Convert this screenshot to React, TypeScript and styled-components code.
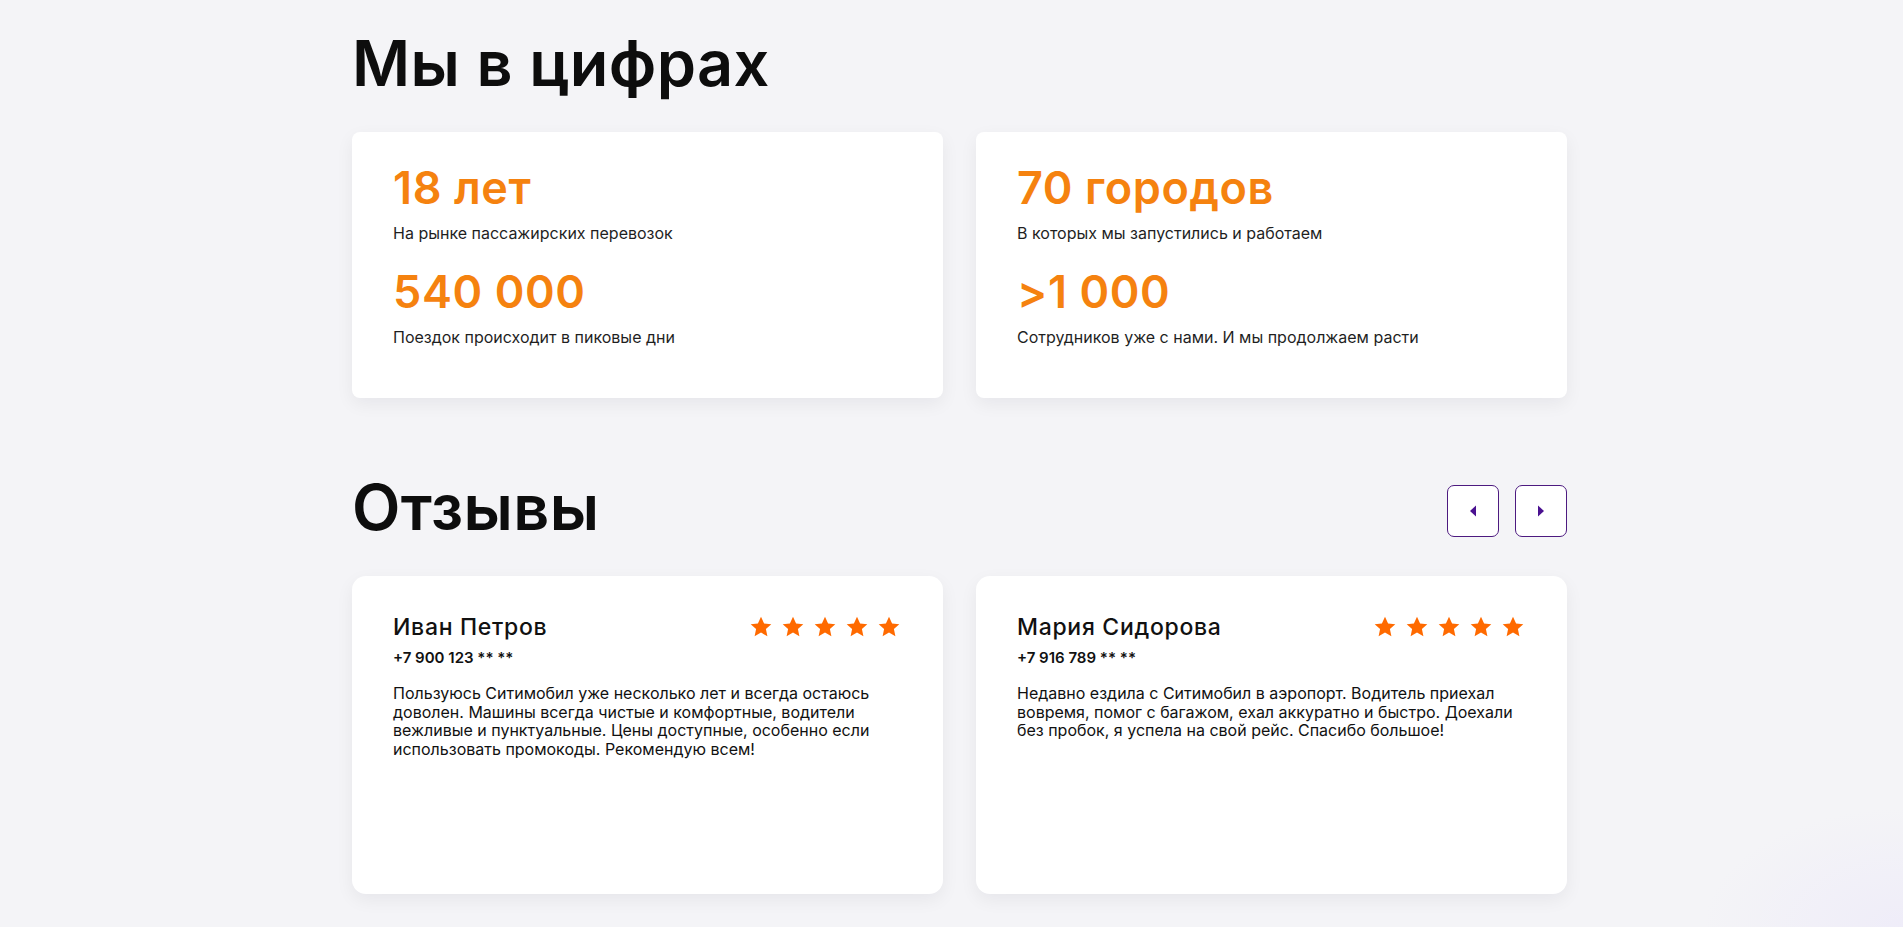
import React from "react";
import styled, { createGlobalStyle } from "styled-components";

const GlobalStyle = createGlobalStyle`
  html, body {
    margin: 0;
    padding: 0;
  }
  body {
    font-family: Inter, "Noto Sans", Arial, sans-serif;
    color: #111;
    background: #f4f4f7;
  }
  * { box-sizing: border-box; }
`;

const Page = styled.div`
  min-height: 927px;
  background:
    radial-gradient(ellipse 200px 120px at 100% 100%, rgba(220, 210, 255, 0.22), rgba(220, 210, 255, 0) 100%),
    #f4f4f7;
  padding-top: 32px;
  padding-bottom: 34px;
`;

const Container = styled.div`
  width: 1215px;
  margin-left: calc(50% - 599.5px);
`;

const SectionTitle = styled.h2`
  margin: 0;
  font-size: 63px;
  line-height: 62px;
  font-weight: 600;
  letter-spacing: 0.4px;
  color: #0d0d0d;
`;

const Grid = styled.div<{ $top: number }>`
  display: grid;
  grid-template-columns: 1fr 1fr;
  column-gap: 33px;
  margin-top: ${(p) => p.$top}px;
`;

const StatCard = styled.div`
  background: #fff;
  border-radius: 8px;
  box-shadow: 0 6px 18px rgba(20, 20, 40, 0.06);
  padding: 34px 41px 49px;
  height: 266px;
  display: flex;
  flex-direction: column;
  gap: 27px;
`;

const StatItem = styled.div`
  display: flex;
  flex-direction: column;
  gap: 13px;
`;

const StatValue = styled.div`
  font-size: 45px;
  line-height: 44px;
  font-weight: 600;
  color: #f5820f;
  letter-spacing: 0.6px;
`;

const StatLabel = styled.div`
  font-size: 16px;
  line-height: 20px;
  color: #1f1f1f;
`;

const Header = styled.div`
  display: flex;
  justify-content: space-between;
  align-items: flex-end;
  margin-top: 78px;
`;

const Nav = styled.div`
  display: flex;
  gap: 16px;
  margin-bottom: 1px;
`;

const ArrowButton = styled.button`
  width: 52px;
  height: 52px;
  border: 1px solid #4d1a80;
  border-radius: 7px;
  background: #fff;
  display: flex;
  align-items: center;
  justify-content: center;
  padding: 0;
  cursor: pointer;
  color: #4a1190;
`;

const ReviewCard = styled.div`
  background: #fff;
  border-radius: 14px;
  box-shadow: 0 6px 18px rgba(20, 20, 40, 0.06);
  height: 318px;
  padding: 38px 42px 40px 41px;
`;

const ReviewHead = styled.div`
  display: flex;
  justify-content: space-between;
  align-items: center;
`;

const Name = styled.div`
  font-size: 23px;
  line-height: 26px;
  font-weight: 500;
  letter-spacing: 0.7px;
  color: #111;
`;

const Stars = styled.div`
  display: flex;
  gap: 8px;
`;

const Phone = styled.div`
  margin-top: 8px;
  font-size: 15px;
  line-height: 20px;
  font-weight: 600;
  color: #111;
`;

const ReviewText = styled.p`
  margin: 16px 0 0;
  font-size: 16px;
  line-height: 18.5px;
  color: #111;
`;

const Star = () => (
  <svg width="24" height="24" viewBox="0 0 24 24" aria-hidden="true">
    <path
      d="M12 1.8l3.1 6.6 7.2.8-5.4 4.9 1.5 7.1L12 17.6l-6.4 3.6 1.5-7.1L1.7 9.2l7.2-.8z"
      fill="#ff6a00"
    />
  </svg>
);

const Triangle = ({ dir }: { dir: "left" | "right" }) => (
  <svg width="10" height="14" viewBox="0 0 10 14" aria-hidden="true">
    <path d={dir === "left" ? "M8 1.5v11L2 7z" : "M2 1.5v11L8 7z"} fill="currentColor" />
  </svg>
);

const stats = [
  [
    { value: "18 лет", label: "На рынке пассажирских перевозок" },
    { value: "540 000", label: "Поездок происходит в пиковые дни" },
  ],
  [
    { value: "70 городов", label: "В которых мы запустились и работаем" },
    { value: ">1 000", label: "Сотрудников уже с нами. И мы продолжаем расти" },
  ],
];

const reviews = [
  {
    name: "Иван Петров",
    phone: "+7 900 123 ** **",
    text:
      "Пользуюсь Ситимобил уже несколько лет и всегда остаюсь доволен. Машины всегда чистые и комфортные, водители вежливые и пунктуальные. Цены доступные, особенно если использовать промокоды. Рекомендую всем!",
  },
  {
    name: "Мария Сидорова",
    phone: "+7 916 789 ** **",
    text:
      "Недавно ездила с Ситимобил в аэропорт. Водитель приехал вовремя, помог с багажом, ехал аккуратно и быстро. Доехали без пробок, я успела на свой рейс. Спасибо большое!",
  },
];

export default function App() {
  return (
    <>
      <GlobalStyle />
      <Page>
        <Container>
          <SectionTitle>Мы в цифрах</SectionTitle>
          <Grid $top={38}>
            {stats.map((col, i) => (
              <StatCard key={i}>
                {col.map((s) => (
                  <StatItem key={s.value}>
                    <StatValue>{s.value}</StatValue>
                    <StatLabel>{s.label}</StatLabel>
                  </StatItem>
                ))}
              </StatCard>
            ))}
          </Grid>

          <Header>
            <SectionTitle>Отзывы</SectionTitle>
            <Nav>
              <ArrowButton aria-label="Назад">
                <Triangle dir="left" />
              </ArrowButton>
              <ArrowButton aria-label="Вперёд">
                <Triangle dir="right" />
              </ArrowButton>
            </Nav>
          </Header>

          <Grid $top={38}>
            {reviews.map((r) => (
              <ReviewCard key={r.name}>
                <ReviewHead>
                  <Name>{r.name}</Name>
                  <Stars>
                    {[0, 1, 2, 3, 4].map((k) => (
                      <Star key={k} />
                    ))}
                  </Stars>
                </ReviewHead>
                <Phone>{r.phone}</Phone>
                <ReviewText>{r.text}</ReviewText>
              </ReviewCard>
            ))}
          </Grid>
        </Container>
      </Page>
    </>
  );
}
